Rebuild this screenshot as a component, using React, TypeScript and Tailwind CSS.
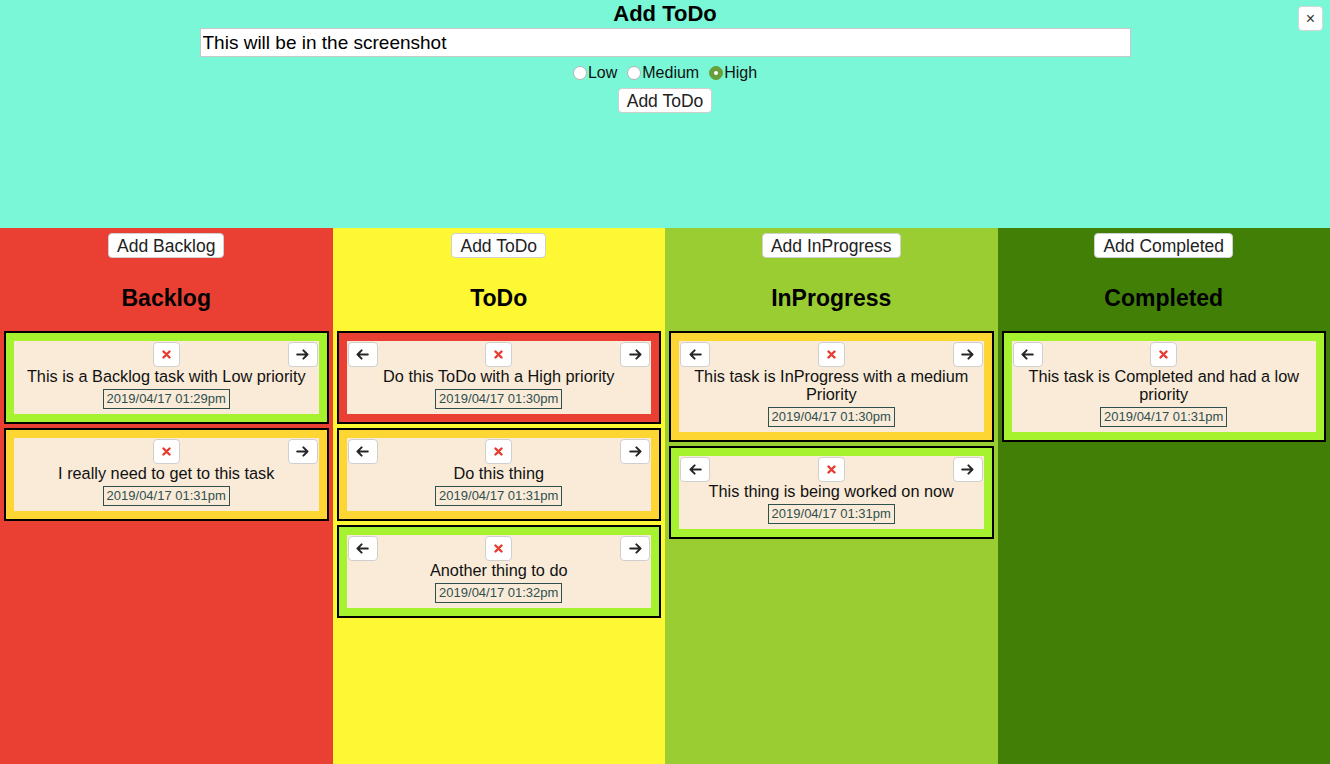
import { useState } from 'react';

type Priority = 'low' | 'medium' | 'high';
type Task = { text: string; date: string; priority: Priority };
type Column = { name: string; bg: string; tasks: Task[] };

const priorityBg: Record<Priority, string> = {
  low: 'bg-[#a7f22f]',
  medium: 'bg-[#fdd633]',
  high: 'bg-[#ea4034]',
};

const columns: Column[] = [
  {
    name: 'Backlog',
    bg: 'bg-[#ea4034]',
    tasks: [
      { text: 'This is a Backlog task with Low priority', date: '2019/04/17 01:29pm', priority: 'low' },
      { text: 'I really need to get to this task', date: '2019/04/17 01:31pm', priority: 'medium' },
    ],
  },
  {
    name: 'ToDo',
    bg: 'bg-[#fdf734]',
    tasks: [
      { text: 'Do this ToDo with a High priority', date: '2019/04/17 01:30pm', priority: 'high' },
      { text: 'Do this thing', date: '2019/04/17 01:31pm', priority: 'medium' },
      { text: 'Another thing to do', date: '2019/04/17 01:32pm', priority: 'low' },
    ],
  },
  {
    name: 'InProgress',
    bg: 'bg-[#9acd32]',
    tasks: [
      { text: 'This task is InProgress with a medium Priority', date: '2019/04/17 01:30pm', priority: 'medium' },
      { text: 'This thing is being worked on now', date: '2019/04/17 01:31pm', priority: 'low' },
    ],
  },
  {
    name: 'Completed',
    bg: 'bg-[#417f07]',
    tasks: [
      { text: 'This task is Completed and had a low priority', date: '2019/04/17 01:31pm', priority: 'low' },
    ],
  },
];

const Arrow = ({ dir }: { dir: 'left' | 'right' }) => (
  <svg width="13" height="11" viewBox="0 0 13 11" fill="none" stroke="#262626" strokeWidth="2" strokeLinecap="round" strokeLinejoin="round">
    {dir === 'left' ? (
      <path d="M11.8 5.5H1.5M5.6 1.4L1.5 5.5l4.1 4.1" />
    ) : (
      <path d="M1.2 5.5h10.3M7.4 1.4l4.1 4.1-4.1 4.1" />
    )}
  </svg>
);

const Cross = () => (
  <svg width="9" height="9" viewBox="0 0 9 9" stroke="#e83a2f" strokeWidth="2.4" strokeLinecap="round">
    <path d="M1.5 1.5l6 6M7.5 1.5l-6 6" />
  </svg>
);

const SmallButton = ({ children, wide }: { children: React.ReactNode; wide?: boolean }) => (
  <button
    className={`flex h-[25px] items-center justify-center rounded-[4px] border border-[#cfcfcf] bg-white ${
      wide ? 'w-[30px]' : 'w-[27px]'
    }`}
  >
    {children}
  </button>
);

const Card = ({ task, first, last }: { task: Task; first: boolean; last: boolean }) => (
  <div className={`mx-[4px] mb-[4px] border-2 border-black p-[8px] ${priorityBg[task.priority]}`}>
    <div className="flex flex-col items-center bg-[#f9ebd8] p-[1px] pb-[5px]">
      <div className="grid w-full grid-cols-3 items-center">
        <div className="flex justify-start">
          {!first && (
            <SmallButton wide>
              <Arrow dir="left" />
            </SmallButton>
          )}
        </div>
        <div className="flex justify-center">
          <SmallButton>
            <Cross />
          </SmallButton>
        </div>
        <div className="flex justify-end">
          {!last && (
            <SmallButton wide>
              <Arrow dir="right" />
            </SmallButton>
          )}
        </div>
      </div>
      <p className="text-center text-[16.3px] leading-[18px] text-[#111]">{task.text}</p>
      <span className="mt-[4px] border border-[#2f4f4f] px-[3px] text-[13px] leading-[18px] text-[#2f4f4f]">
        {task.date}
      </span>
    </div>
  </div>
);

const Radio = ({ label, checked, onClick }: { label: string; checked: boolean; onClick: () => void }) => (
  <label className="flex cursor-pointer items-center" onClick={onClick}>
    <span
      className={`flex h-[14px] w-[14px] items-center justify-center rounded-full border ${
        checked ? 'border-[#6a9f3e] bg-[#6a9f3e]' : 'border-[#b5b5b5] bg-white'
      }`}
    >
      {checked && <span className="h-[4px] w-[4px] rounded-full bg-white" />}
    </span>
    <span className="ml-[1px] text-[16px] leading-[20px] text-[#111]">{label}</span>
  </label>
);

export default function App() {
  const [priority, setPriority] = useState<Priority>('high');

  return (
    <div className="flex h-screen flex-col overflow-hidden font-['Liberation_Sans',Arial,sans-serif]">
      <div className="relative flex h-[228px] shrink-0 flex-col items-center bg-[#79f7d6]">
        <h1 className="text-[22px] font-bold leading-[28px] text-black">Add ToDo</h1>
        <input
          className="h-[29px] w-[70%] border border-[#c8c8c8] bg-white px-[2px] text-[19px] text-black outline-none"
          defaultValue="This will be in the screenshot"
        />
        <div className="mt-[6px] flex items-center gap-[10px]">
          <Radio label="Low" checked={priority === 'low'} onClick={() => setPriority('low')} />
          <Radio label="Medium" checked={priority === 'medium'} onClick={() => setPriority('medium')} />
          <Radio label="High" checked={priority === 'high'} onClick={() => setPriority('high')} />
        </div>
        <button className="mt-[5px] h-[25px] rounded-[4px] border border-[#cfcfcf] bg-white px-[8px] text-[17.5px] leading-[20px] text-[#222]">
          Add ToDo
        </button>
        <button className="absolute right-[7px] top-[6px] flex h-[25px] w-[25px] items-center justify-center rounded-[4px] border border-[#d6d6d6] bg-white text-[16px] text-[#333]">
          ×
        </button>
      </div>
      <div className="grid flex-1 grid-cols-4">
        {columns.map((col, ci) => (
          <div key={col.name} className={`flex flex-col pt-[5px] ${col.bg}`}>
            <div className="flex justify-center">
              <button className="h-[25px] rounded-[4px] border border-[#cfcfcf] bg-white px-[8px] text-[17.5px] leading-[20px] text-[#222]">
                Add {col.name}
              </button>
            </div>
            <h2 className="mb-[19px] mt-[26px] text-center text-[23px] font-bold leading-[28px] text-black">
              {col.name}
            </h2>
            {col.tasks.map((t) => (
              <Card key={t.text} task={t} first={ci === 0} last={ci === columns.length - 1} />
            ))}
          </div>
        ))}
      </div>
    </div>
  );
}
